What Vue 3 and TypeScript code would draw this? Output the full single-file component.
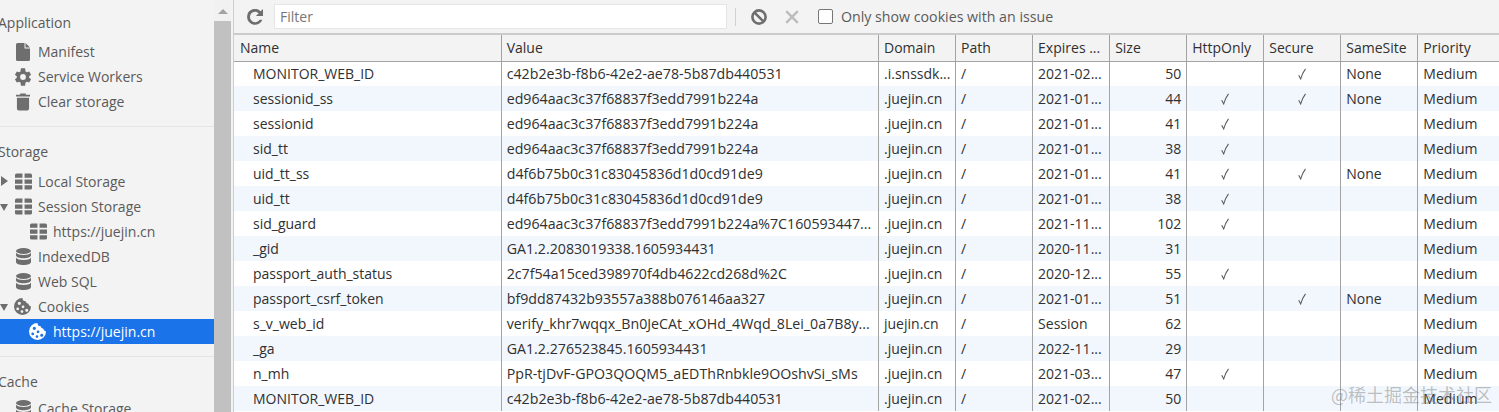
<script setup lang="ts">
interface Row { n: string; v: string; d: string; e: string; s: number; h?: boolean; c?: boolean; m?: string }
const cols = ['Name', 'Value', 'Domain', 'Path', 'Expires ...', 'Size', 'HttpOnly', 'Secure', 'SameSite', 'Priority']
const widths = [267, 377, 77, 77, 77, 77, 77, 77, 77, 82]
const rows: Row[] = [
  { n: 'MONITOR_WEB_ID', v: 'c42b2e3b-f8b6-42e2-ae78-5b87db440531', d: '.i.snssdk...', e: '2021-02...', s: 50, c: true, m: 'None' },
  { n: 'sessionid_ss', v: 'ed964aac3c37f68837f3edd7991b224a', d: '.juejin.cn', e: '2021-01...', s: 44, h: true, c: true, m: 'None' },
  { n: 'sessionid', v: 'ed964aac3c37f68837f3edd7991b224a', d: '.juejin.cn', e: '2021-01...', s: 41, h: true },
  { n: 'sid_tt', v: 'ed964aac3c37f68837f3edd7991b224a', d: '.juejin.cn', e: '2021-01...', s: 38, h: true },
  { n: 'uid_tt_ss', v: 'd4f6b75b0c31c83045836d1d0cd91de9', d: '.juejin.cn', e: '2021-01...', s: 41, h: true, c: true, m: 'None' },
  { n: 'uid_tt', v: 'd4f6b75b0c31c83045836d1d0cd91de9', d: '.juejin.cn', e: '2021-01...', s: 38, h: true },
  { n: 'sid_guard', v: 'ed964aac3c37f68837f3edd7991b224a%7C160593447...', d: '.juejin.cn', e: '2021-11...', s: 102, h: true },
  { n: '_gid', v: 'GA1.2.2083019338.1605934431', d: '.juejin.cn', e: '2020-11...', s: 31 },
  { n: 'passport_auth_status', v: '2c7f54a15ced398970f4db4622cd268d%2C', d: '.juejin.cn', e: '2020-12...', s: 55, h: true },
  { n: 'passport_csrf_token', v: 'bf9dd87432b93557a388b076146aa327', d: '.juejin.cn', e: '2021-01...', s: 51, c: true, m: 'None' },
  { n: 's_v_web_id', v: 'verify_khr7wqqx_Bn0JeCAt_xOHd_4Wqd_8Lei_0a7B8y...', d: 'juejin.cn', e: 'Session', s: 62 },
  { n: '_ga', v: 'GA1.2.276523845.1605934431', d: '.juejin.cn', e: '2022-11...', s: 29 },
  { n: 'n_mh', v: 'PpR-tjDvF-GPO3QOQM5_aEDThRnbkle9OOshvSi_sMs', d: '.juejin.cn', e: '2021-03...', s: 47, h: true },
  { n: 'MONITOR_WEB_ID', v: 'c42b2e3b-f8b6-42e2-ae78-5b87db440531', d: '.juejin.cn', e: '2021-02...', s: 50 },
]
</script>

<template>
  <div class="app">
    <svg width="0" height="0" class="defs">
      <defs>
        <symbol id="grid" viewBox="0 0 16 15">
          <path d="M0 1.500A1.500 1.500 0 0 1 1.500 0H7v4H0zM9 0h5.500A1.500 1.500 0 0 1 16 1.500V4H9zM0 5.500h7v4H0zM9 5.500h7v4H9zM0 11h7v4H1.500A1.500 1.500 0 0 1 0 13.500zM9 11h7v2.500a1.500 1.500 0 0 1-1.500 1.500H9z" />
        </symbol>
        <symbol id="db" viewBox="0 0 16 17">
          <ellipse cx="8" cy="3" rx="7.500" ry="3" />
          <path d="M.5 4.800C1.600 6.300 4.600 7 8 7s6.400-.7 7.500-2.200V7.300c0 1.700-3.400 3-7.500 3S.5 9 .5 7.300zM.5 9.800C1.600 11.300 4.600 12 8 12s6.400-.7 7.500-2.200V14c0 1.700-3.400 3-7.500 3s-7.500-1.300-7.500-3z" />
        </symbol>
        <symbol id="cookie" viewBox="0 0 16 16">
          <path fill-rule="evenodd" d="M8 0a3 3 0 0 0 3 3 3 3 0 0 0 2.500 2.500A3 3 0 0 0 16 8 8 8 0 1 1 8 0zM5 3.500a1.500 1.500 0 1 0 0 3 1.500 1.500 0 0 0 0-3zM3.500 9a1.300 1.300 0 1 0 0 2.600 1.300 1.300 0 0 0 0-2.600zM8.500 7a1.300 1.300 0 1 0 0 2.600 1.300 1.300 0 0 0 0-2.600zM7.500 11.500a1.300 1.300 0 1 0 0 2.600 1.300 1.300 0 0 0 0-2.600zM12 10a1.500 1.500 0 1 0 0 3 1.500 1.500 0 0 0 0-3z" />
        </symbol>
        <symbol id="tick" viewBox="0 0 8 12">
          <path d="M.7 7.300l2 3.600C3.800 7 5.300 3.600 7.500.8" fill="none" stroke="#5c5c5c" stroke-width="1.100" />
        </symbol>
      </defs>
    </svg>

    <aside class="sidebar">
      <div class="tree">
        <div class="label">Application</div>
        <div class="item first-gap">
          <svg class="ic doc" viewBox="0 0 14 18"><path d="M1.500 0H8.500v5.500H14v11a1.500 1.500 0 0 1-1.500 1.500h-11A1.500 1.500 0 0 1 0 16.500v-15A1.500 1.500 0 0 1 1.500 0zM9.500 0L14 4.500H9.500z" /></svg>
          <span>Manifest</span>
        </div>
        <div class="item">
          <svg class="ic gear" viewBox="0 0 24 24"><path d="M19.400 13a7.600 7.600 0 0 0 0-2l2.300-1.800-2.300-3.900-2.700 1.100a7.500 7.500 0 0 0-1.700-1L14.500 1.500h-5L9 5.400a7.500 7.500 0 0 0-1.700 1L4.600 5.300 2.300 9.200 4.600 11a7.600 7.600 0 0 0 0 2l-2.300 1.800 2.300 3.900 2.700-1.100a7.500 7.500 0 0 0 1.700 1l.5 3.900h5l.5-3.900a7.500 7.500 0 0 0 1.700-1l2.700 1.100 2.300-3.900zM12 15.500a3.500 3.500 0 1 1 0-7 3.500 3.500 0 0 1 0 7z" fill-rule="evenodd" /></svg>
          <span>Service Workers</span>
        </div>
        <div class="item">
          <svg class="ic doc" viewBox="0 0 15 18"><path d="M0 1.200h4.500V0h6v1.200H15v2H0zM1 4.500h13V16a2 2 0 0 1-2 2H3a2 2 0 0 1-2-2z" /></svg>
          <span>Clear storage</span>
        </div>
        <div class="divider"></div>
        <div class="label">Storage</div>
        <div class="item top-gap">
          <i class="tri right"></i>
          <svg class="ic"><use href="#grid" /></svg>
          <span>Local Storage</span>
        </div>
        <div class="item">
          <i class="tri down"></i>
          <svg class="ic"><use href="#grid" /></svg>
          <span>Session Storage</span>
        </div>
        <div class="item nested">
          <svg class="ic"><use href="#grid" /></svg>
          <span>https://juejin.cn</span>
        </div>
        <div class="item">
          <svg class="ic"><use href="#db" /></svg>
          <span>IndexedDB</span>
        </div>
        <div class="item">
          <svg class="ic"><use href="#db" /></svg>
          <span>Web SQL</span>
        </div>
        <div class="item">
          <i class="tri down"></i>
          <svg class="ic cookie"><use href="#cookie" /></svg>
          <span>Cookies</span>
        </div>
        <div class="item nested selected">
          <svg class="ic cookie"><use href="#cookie" /></svg>
          <span>https://juejin.cn</span>
        </div>
        <div class="divider"></div>
        <div class="label">Cache</div>
        <div class="item small-gap">
          <svg class="ic"><use href="#db" /></svg>
          <span>Cache Storage</span>
        </div>
      </div>
      <div class="scrollbar">
        <i class="arrow"></i>
        <div class="thumb"></div>
      </div>
    </aside>

    <main class="main">
      <div class="toolbar">
        <svg class="refresh" viewBox="0 0 16 16"><path d="M13.600 2.300A7.900 7.900 0 0 0 .1 8a7.900 7.900 0 0 0 15.300 2.700h-2.800A5.200 5.200 0 1 1 8 2.800c1.400 0 2.700.6 3.700 1.500L8.900 7.100H16V0z" /></svg>
        <div class="filter">Filter</div>
        <div class="sep"></div>
        <svg class="block" viewBox="0 0 16 16"><circle cx="8" cy="8" r="6.600" fill="none" stroke-width="2.600" /><path d="M3.300 3.300l9.400 9.400" fill="none" stroke-width="2.600" /></svg>
        <svg class="close" viewBox="0 0 14 14"><path d="M1.200 1.200l11.600 11.600M12.800 1.200L1.200 12.800" fill="none" stroke-width="2.400" /></svg>
        <i class="check"></i>
        <span class="only">Only show cookies with an issue</span>
      </div>
      <div class="table-wrap">
        <table>
          <colgroup><col v-for="(w, i) in widths" :key="i" :style="{ width: w + 'px' }" /></colgroup>
          <thead>
            <tr><th v-for="c in cols" :key="c">{{ c }}</th></tr>
          </thead>
          <tbody>
            <tr v-for="(r, i) in rows" :key="i">
              <td class="name">{{ r.n }}</td>
              <td class="value">{{ r.v }}</td>
              <td>{{ r.d }}</td>
              <td>/</td>
              <td>{{ r.e }}</td>
              <td class="num">{{ r.s }}</td>
              <td class="tick"><svg v-if="r.h" class="tk"><use href="#tick" /></svg></td>
              <td class="tick"><svg v-if="r.c" class="tk"><use href="#tick" /></svg></td>
              <td>{{ r.m }}</td>
              <td>Medium</td>
            </tr>
          </tbody>
        </table>
      </div>
    </main>
    <div class="watermark">@稀土掘金技术社区</div>
  </div>
</template>

<style>
html, body { margin: 0; background: #fff; overflow: hidden; }
</style>

<style scoped>
.app {
  position: relative;
  display: flex;
  width: 1499px;
  height: 412px;
  overflow: hidden;
  font-family: "Open Sans", "Noto Sans", sans-serif;
  font-size: 14px;
  color: #303030;
}
.defs { position: absolute; }
.sidebar {
  display: flex;
  flex: 0 0 234px;
  background: #f3f3f3;
}
.tree { flex: 0 0 214px; padding-top: 10px; overflow: hidden; color: #5a5a5a; }
.label { height: 25px; line-height: 25px; margin-left: -2px; }
.item {
  position: relative;
  display: flex;
  align-items: center;
  height: 25px;
  padding-left: 38px;
  white-space: nowrap;
}
.first-gap { margin-top: 4px; }
.top-gap { margin-top: 5px; }
.small-gap { margin-top: 2px; }
.item.nested { padding-left: 53px; }
.ic {
  position: absolute;
  left: 15px;
  top: 4px;
  width: 17px;
  height: 17px;
  fill: #6e6e6e;
}
.ic.doc { left: 16px; width: 14px; height: 18px; top: 4px; }
.ic.gear { left: 13px; width: 20px; height: 20px; top: 3px; }
.ic.cookie { left: 14px; }
.nested .ic { left: 30px; }
.nested .ic.cookie { left: 29px; }
.tri { position: absolute; left: 1px; width: 0; height: 0; }
.tri.right { top: 7px; border-left: 7px solid #6e6e6e; border-top: 5px solid transparent; border-bottom: 5px solid transparent; }
.tri.down { top: 10px; left: 0; border-top: 7px solid #6e6e6e; border-left: 4.500px solid transparent; border-right: 4.500px solid transparent; }
.selected { background: #1a73e8; color: #fff; }
.selected .ic { fill: #fff; }
.divider { height: 1px; margin: 12px 0; background: #e4e4e4; }
.scrollbar { flex: 0 0 17px; display: flex; flex-direction: column; background: #f1f1f1; }
.arrow { align-self: center; margin: 9px 0 7px; border-bottom: 5px solid #a3a3a3; border-left: 5px solid transparent; border-right: 5px solid transparent; }
.thumb { flex: 1; background: #c1c1c1; }
.main { flex: 1; min-width: 0; border-left: 1px solid #ccc; display: flex; flex-direction: column; margin-left: -1px; }
.toolbar {
  display: flex;
  align-items: center;
  flex: 0 0 35px;
  box-sizing: border-box;
  height: 35px;
  background: #f3f3f3;
  border-bottom: 2px solid #cbcbcb;
  color: #5a5a5a;
}
.refresh { width: 16px; height: 16px; margin-left: 13px; fill: #6e6e6e; }
.filter {
  box-sizing: border-box;
  width: 453px;
  height: 25px;
  line-height: 23px;
  margin-left: 11px;
  padding-left: 5px;
  background: #fff;
  border: 1px solid #e6e6e6;
  color: #777;
}
.sep { width: 1px; height: 18px; margin-left: 8px; background: #d0d0d0; }
.block { width: 16px; height: 16px; margin-left: 15px; stroke: #6e6e6e; }
.close { width: 14px; height: 14px; margin-left: 18px; stroke: #bdbdbd; }
.check { box-sizing: border-box; width: 15px; height: 15px; margin-left: 19px; border: 1px solid #767676; border-radius: 2px; background: #fff; }
.only { margin-left: 8px; font-size: 14.200px; }
.table-wrap { flex: 1; overflow: hidden; }
table { table-layout: fixed; border-collapse: collapse; width: 1266px; }
th {
  box-sizing: border-box;
  height: 26px;
  padding: 0 5px;
  text-align: left;
  font-weight: 400;
  background: #f3f3f3;
  border-bottom: 1px solid #a3a3a3;
  border-right: 1px solid #a3a3a3;
  white-space: nowrap;
  overflow: hidden;
}
th:first-child { padding-left: 6px; }
td {
  box-sizing: border-box;
  height: 25px;
  padding: 0 5px;
  border-right: 1px solid #a3a3a3;
  white-space: nowrap;
  overflow: hidden;
}
th:last-child, td:last-child { border-right: 0; }
tbody tr:nth-child(even) { background: #f2f7fd; }
td.name { padding-left: 19px; }
td.value { font-size: 14.200px; }
td.num { text-align: right; padding-right: 5px; }
td.tick { text-align: center; padding: 0; line-height: 0; }
.tk { width: 8px; height: 12px; }
.watermark {
  position: absolute;
  right: 7px;
  bottom: 7px;
  line-height: 22px;
  font-family: "Noto Sans CJK SC", sans-serif;
  font-size: 18px;
  color: rgba(120, 120, 120, 0.45);
}
</style>
